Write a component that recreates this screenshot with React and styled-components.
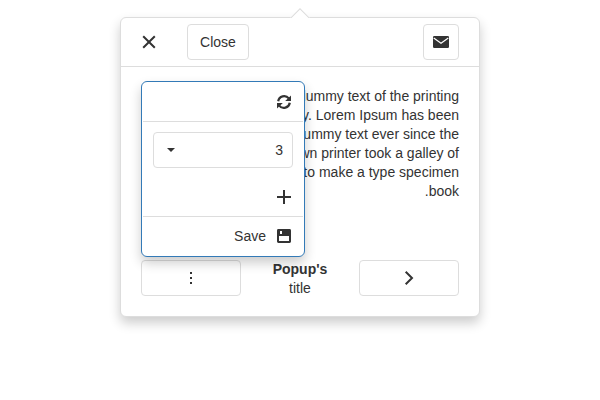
import React from "react";
import styled, { createGlobalStyle } from "styled-components";

const GlobalStyle = createGlobalStyle`
  body {
    margin: 0;
    background: #fff;
    color: #333;
    font: 14px/19px "Liberation Sans", Arial, sans-serif;
  }
  *, *::before, *::after { box-sizing: border-box; }
`;

const Page = styled.main`
  direction: rtl;
  height: 400px;
  padding-top: 17px;
  overflow: hidden;
`;

const Popover = styled.section`
  position: relative;
  display: flex;
  flex-direction: column;
  width: 360px;
  height: 300px;
  margin: 0 auto;
  background: #fff;
  border: 1px solid #ddd;
  border-radius: 6px;
  box-shadow: 0 6px 12px rgba(0, 0, 0, 0.2);
`;

const Arrow = styled.div`
  position: absolute;
  left: 169px;
  top: -10px;
  width: 20px;
  height: 10px;
  overflow: hidden;

  &::before {
    content: "";
    position: absolute;
    left: 3px;
    top: 3px;
    width: 14px;
    height: 14px;
    background: #fff;
    border: 1px solid #ddd;
    transform: rotate(45deg);
  }
`;

const Header = styled.header`
  display: flex;
  align-items: center;
  height: 49px;
  padding: 0 20px;
  border-bottom: 1px solid #ddd;
`;

const Button = styled.button`
  display: flex;
  align-items: center;
  justify-content: center;
  width: ${(p) => p.$width}px;
  height: 36px;
  padding: 0;
  color: inherit;
  font: inherit;
  background: #fff;
  border: 1px solid #ddd;
  border-radius: 4px;
`;

const PlainButton = styled(Button)`
  margin: 0 20px 0 -10px;
  border-color: transparent;
`;

const HeaderEnd = styled.div`
  display: flex;
  align-items: center;
  margin-right: auto;
`;

const Content = styled.div`
  display: flex;
  flex: 1;
  flex-direction: column;
  justify-content: space-between;
  padding: 20px 20px 18px;
`;

const Paragraph = styled.p`
  margin: 0;
`;

const Footer = styled.footer`
  display: flex;
  align-items: flex-start;
  justify-content: space-between;
`;

const Title = styled.div`
  display: flex;
  flex-direction: column;
  text-align: center;
`;

const Menu = styled.div`
  position: absolute;
  left: 20px;
  top: 63px;
  width: 164px;
  height: 176px;
  padding: 1px;
  background: #fff;
  border: 1px solid #337ab7;
  border-radius: 6px;
  box-shadow: 0 6px 12px rgba(0, 0, 0, 0.2);
`;

const MenuItem = styled.div`
  display: flex;
  align-items: center;
  gap: 9px;
  height: 38px;
  padding: 0 10px;
`;

const MenuGroup = styled.div`
  border-top: 1px solid #ddd;
`;

const SelectRow = styled.div`
  padding: 10px;
`;

const Select = styled.div`
  display: flex;
  align-items: center;
  justify-content: space-between;
  width: 140px;
  height: 36px;
  padding: 0 9px 0 8px;
  border: 1px solid #ddd;
  border-radius: 4px;
`;

const Icon = styled.svg`
  display: block;
  width: 18px;
  height: 18px;
  flex: none;
  fill: #333;
`;

const Stroke = styled(Icon)`
  fill: none;
  stroke: #333;
  stroke-width: 2;
`;

export default function App() {
  return (
    <>
      <GlobalStyle />
      <Page>
        <Popover>
          <Arrow />
          <Header>
            <Button $width={36} aria-label="Email">
              <Icon viewBox="0 0 18 18">
                <rect x="1" y="3" width="16" height="12" rx="1.2" />
                <path d="M1.700 5 9 10.300l7.300-5.300" fill="none" stroke="#fff" strokeWidth="1.2" />
              </Icon>
            </Button>
            <HeaderEnd>
              <Button $width={62}>Close</Button>
              <PlainButton $width={36} aria-label="Dismiss">
                <Stroke viewBox="0 0 18 18">
                  <path d="M3.200 3.200l11.600 11.600M14.800 3.200L3.200 14.800" />
                </Stroke>
              </PlainButton>
            </HeaderEnd>
          </Header>
          <Content>
            <Paragraph>
              Lorem Ipsum is simply dummy text of the printing and typesetting
              industry. Lorem Ipsum has been the industry's standard dummy text
              ever since the 1500s, when an unknown printer took a galley of
              type and scrambled it to make a type specimen book.
            </Paragraph>
            <Footer>
              <Button $width={100} aria-label="Next">
                <Stroke viewBox="0 0 18 18">
                  <path d="M5.700 2.700 12 9l-6.300 6.300" />
                </Stroke>
              </Button>
              <Title>
                <b>Popup's</b>
                <span>title</span>
              </Title>
              <Button $width={100} aria-label="More">
                <Icon viewBox="0 0 18 18">
                  <path d="M8 3h2v2H8zM8 8h2v2H8zM8 13h2v2H8z" />
                </Icon>
              </Button>
            </Footer>
          </Content>
          <Menu>
            <MenuItem>
              <Icon viewBox="0 0 18 18">
                <g fill="none" stroke="#333" strokeWidth="2.2">
                  <path d="M3.200 8.200A6 6 0 0 1 13.800 5.400" />
                  <path d="M14.800 9.800A6 6 0 0 1 4.200 12.600" />
                </g>
                <path d="M16 2.500V8h-5.800z" />
                <path d="M2 15.500V10h5.800z" />
              </Icon>
            </MenuItem>
            <MenuGroup>
              <SelectRow>
                <Select>
                  <span>3</span>
                  <Icon viewBox="0 0 18 18">
                    <path d="M5 7h8l-4 4z" />
                  </Icon>
                </Select>
              </SelectRow>
              <MenuItem>
                <Icon viewBox="0 0 18 18">
                  <path d="M8 2h2v6h6v2h-6v6H8v-6H2V8h6z" />
                </Icon>
              </MenuItem>
            </MenuGroup>
            <MenuGroup>
              <MenuItem>
                <Icon viewBox="0 0 18 18">
                  <path
                    fillRule="evenodd"
                    d="M3.400 2h11.200a1.400 1.400 0 0 1 1.400 1.400v11.200a1.400 1.400 0 0 1-1.400 1.400H3.400a1.400 1.400 0 0 1-1.400-1.400V3.400a1.400 1.400 0 0 1 1.400-1.400zM5 4v3h2V4zM4 9v5h10V9z"
                  />
                </Icon>
                <span>Save</span>
              </MenuItem>
            </MenuGroup>
          </Menu>
        </Popover>
      </Page>
    </>
  );
}
